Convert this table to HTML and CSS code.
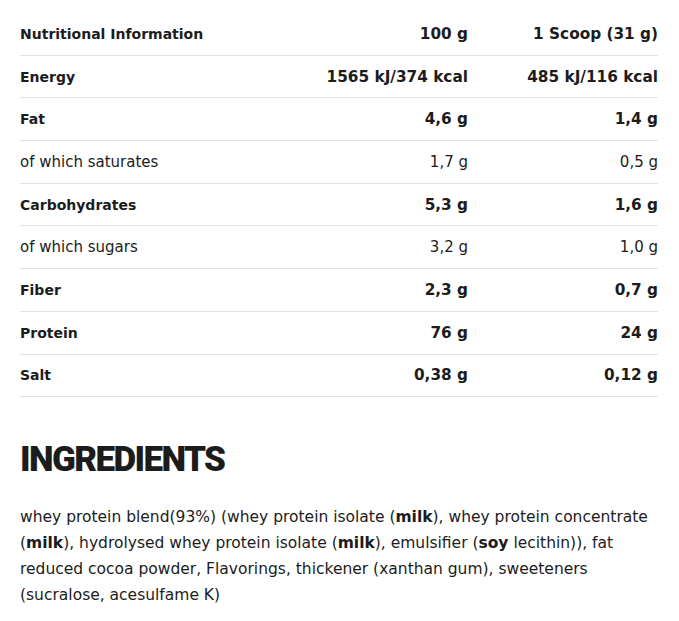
FILE: index.html
```html
<!DOCTYPE html>
<html>
<head>
<meta charset="utf-8">
<link rel="stylesheet" href="styles.css">
</head>
<body>
<main class="page">
  <table class="nutri">
    <colgroup><col class="c1"><col class="c2"><col class="c3"></colgroup>
    <tr class="b"><td>Nutritional Information</td><td class="num">100 g</td><td class="num">1 Scoop (31 g)</td></tr>
    <tr class="b"><td>Energy</td><td class="num">1565 kJ/374 kcal</td><td class="num">485 kJ/116 kcal</td></tr>
    <tr class="b"><td>Fat</td><td class="num">4,6 g</td><td class="num">1,4 g</td></tr>
    <tr><td>of which saturates</td><td class="num">1,7 g</td><td class="num">0,5 g</td></tr>
    <tr class="b"><td>Carbohydrates</td><td class="num">5,3 g</td><td class="num">1,6 g</td></tr>
    <tr><td>of which sugars</td><td class="num">3,2 g</td><td class="num">1,0 g</td></tr>
    <tr class="b"><td>Fiber</td><td class="num">2,3 g</td><td class="num">0,7 g</td></tr>
    <tr class="b"><td>Protein</td><td class="num">76 g</td><td class="num">24 g</td></tr>
    <tr class="b"><td>Salt</td><td class="num">0,38 g</td><td class="num">0,12 g</td></tr>
  </table>
  <h2 class="title">INGREDIENTS</h2>
  <p class="ingr">whey protein blend(93%) (whey protein isolate (<b>milk</b>), whey protein concentrate (<b>milk</b>), hydrolysed whey protein isolate (<b>milk</b>), emulsifier (<b>soy</b> lecithin)), fat reduced cocoa powder, Flavorings, thickener (xanthan gum), sweeteners (sucralose, acesulfame K)</p>
</main>
</body>
</html>
```
FILE: styles.css
```css
html, body { margin: 0; padding: 0; background: #fff; }
body { font-family: "DejaVu Sans", sans-serif; color: #1c1c1c; }
.page { padding: 13px 21px 0 20px; width: 638px; }
.nutri { width: 638px; border-collapse: collapse; table-layout: fixed; }
.c1 { width: 258px; }
.c2 { width: 190px; }
.c3 { width: 190px; }
.nutri td { height: 41.7px; padding: 0; border-bottom: 1px solid #e2e2e2; font-size: 15px; vertical-align: middle; }
.nutri tr.b td { font-weight: bold; font-size: 14px; }
.nutri tr.b td.num { font-size: 15.3px; }
.nutri td.num { text-align: right; }
.title { font-family: Roboto, "DejaVu Sans Condensed", sans-serif; font-weight: 900; font-size: 35px; letter-spacing: -1.6px; margin: 43px 0 0 0; line-height: 40px; }
.ingr { margin: 24px 0 0 0; font-size: 15.5px; line-height: 26px; }
.ingr b { font-weight: bold; }
```
